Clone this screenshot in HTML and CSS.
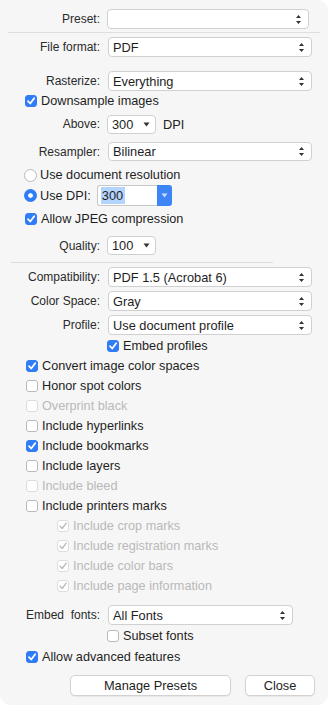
FILE: index.html
```html
<!DOCTYPE html>
<html lang="en">
<head>
    <meta charset="UTF-8">
    <meta name="viewport" content="width=device-width, initial-scale=1.0">
    <title>PDF Options</title>
    <link rel="stylesheet" href="styles.css">
</head>
<body>
    <div class="panel">
        <div class="row preset">
            <span class="label">Preset:</span>
            <div class="select sel-preset"><span></span><svg class="updown" width="7" height="11" viewBox="0 0 7 11"><path d="M3.5 1 L6 4 H1 Z M3.5 10 L6 7 H1 Z" fill="#333"/></svg></div>
        </div>
        <div class="sep sep-top"></div>

        <div class="row r-format">
            <span class="label">File format:</span>
            <div class="select"><span>PDF</span><svg class="updown" width="7" height="11" viewBox="0 0 7 11"><path d="M3.5 1 L6 4 H1 Z M3.5 10 L6 7 H1 Z" fill="#333"/></svg></div>
        </div>
        <div class="row r-raster">
            <span class="label">Rasterize:</span>
            <div class="select"><span>Everything</span><svg class="updown" width="7" height="11" viewBox="0 0 7 11"><path d="M3.5 1 L6 4 H1 Z M3.5 10 L6 7 H1 Z" fill="#333"/></svg></div>
        </div>
        <div class="check top"><span class="box on"><svg width="10" height="10" viewBox="0 0 10 10"><path d="M2 5.2 L4.2 7.5 L8.2 2.2" fill="none" stroke="#fff" stroke-width="1.8" stroke-linecap="round" stroke-linejoin="round"/></svg></span>Downsample images</div>
        <div class="row r-above">
            <span class="label">Above:</span>
            <div class="select small"><span>300</span><svg class="down" width="7" height="5" viewBox="0 0 7 5"><path d="M0.5 0.5 H6.5 L3.5 4.5 Z" fill="#333"/></svg></div>
            <span class="unit">DPI</span>
        </div>
        <div class="row r-resample">
            <span class="label">Resampler:</span>
            <div class="select"><span>Bilinear</span><svg class="updown" width="7" height="11" viewBox="0 0 7 11"><path d="M3.5 1 L6 4 H1 Z M3.5 10 L6 7 H1 Z" fill="#333"/></svg></div>
        </div>
        <div class="radio-row r-docres"><span class="radio"></span>Use document resolution</div>
        <div class="radio-row r-dpi">
            <span class="radio on"></span>Use DPI:
            <div class="combo"><span class="field"><span class="picked">300</span></span><span class="combo-btn"><svg width="7" height="5" viewBox="0 0 7 5"><path d="M0.5 0.5 H6.5 L3.5 4.5 Z" fill="#c9dcfb"/></svg></span></div>
        </div>
        <div class="check top r-jpeg"><span class="box on"><svg width="10" height="10" viewBox="0 0 10 10"><path d="M2 5.2 L4.2 7.5 L8.2 2.2" fill="none" stroke="#fff" stroke-width="1.8" stroke-linecap="round" stroke-linejoin="round"/></svg></span>Allow JPEG compression</div>
        <div class="row r-quality">
            <span class="label">Quality:</span>
            <div class="select small"><span>100</span><svg class="down" width="7" height="5" viewBox="0 0 7 5"><path d="M0.5 0.5 H6.5 L3.5 4.5 Z" fill="#333"/></svg></div>
        </div>
        <div class="sep sep-mid"></div>

        <div class="row r-compat">
            <span class="label">Compatibility:</span>
            <div class="select"><span>PDF 1.5 (Acrobat 6)</span><svg class="updown" width="7" height="11" viewBox="0 0 7 11"><path d="M3.5 1 L6 4 H1 Z M3.5 10 L6 7 H1 Z" fill="#333"/></svg></div>
        </div>
        <div class="row r-space">
            <span class="label">Color Space:</span>
            <div class="select"><span>Gray</span><svg class="updown" width="7" height="11" viewBox="0 0 7 11"><path d="M3.5 1 L6 4 H1 Z M3.5 10 L6 7 H1 Z" fill="#333"/></svg></div>
        </div>
        <div class="row r-space">
            <span class="label">Profile:</span>
            <div class="select"><span>Use document profile</span><svg class="updown" width="7" height="11" viewBox="0 0 7 11"><path d="M3.5 1 L6 4 H1 Z M3.5 10 L6 7 H1 Z" fill="#333"/></svg></div>
        </div>
        <div class="check inner r-embed"><span class="box on"><svg width="10" height="10" viewBox="0 0 10 10"><path d="M2 5.2 L4.2 7.5 L8.2 2.2" fill="none" stroke="#fff" stroke-width="1.8" stroke-linecap="round" stroke-linejoin="round"/></svg></span>Embed profiles</div>
        <div class="check"><span class="box on"><svg width="10" height="10" viewBox="0 0 10 10"><path d="M2 5.2 L4.2 7.5 L8.2 2.2" fill="none" stroke="#fff" stroke-width="1.8" stroke-linecap="round" stroke-linejoin="round"/></svg></span>Convert image color spaces</div>
        <div class="check"><span class="box"></span>Honor spot colors</div>
        <div class="check off"><span class="box"></span>Overprint black</div>
        <div class="check"><span class="box"></span>Include hyperlinks</div>
        <div class="check"><span class="box on"><svg width="10" height="10" viewBox="0 0 10 10"><path d="M2 5.2 L4.2 7.5 L8.2 2.2" fill="none" stroke="#fff" stroke-width="1.8" stroke-linecap="round" stroke-linejoin="round"/></svg></span>Include bookmarks</div>
        <div class="check"><span class="box"></span>Include layers</div>
        <div class="check off"><span class="box"></span>Include bleed</div>
        <div class="check"><span class="box"></span>Include printers marks</div>
        <div class="check sub off"><span class="box"><svg width="10" height="10" viewBox="0 0 10 10"><path d="M2 5.2 L4.2 7.5 L8.2 2.2" fill="none" stroke="#bdbdbd" stroke-width="1.4" stroke-linecap="round" stroke-linejoin="round"/></svg></span>Include crop marks</div>
        <div class="check sub off"><span class="box"><svg width="10" height="10" viewBox="0 0 10 10"><path d="M2 5.2 L4.2 7.5 L8.2 2.2" fill="none" stroke="#bdbdbd" stroke-width="1.4" stroke-linecap="round" stroke-linejoin="round"/></svg></span>Include registration marks</div>
        <div class="check sub off"><span class="box"><svg width="10" height="10" viewBox="0 0 10 10"><path d="M2 5.2 L4.2 7.5 L8.2 2.2" fill="none" stroke="#bdbdbd" stroke-width="1.4" stroke-linecap="round" stroke-linejoin="round"/></svg></span>Include color bars</div>
        <div class="check sub off"><span class="box"><svg width="10" height="10" viewBox="0 0 10 10"><path d="M2 5.2 L4.2 7.5 L8.2 2.2" fill="none" stroke="#bdbdbd" stroke-width="1.4" stroke-linecap="round" stroke-linejoin="round"/></svg></span>Include page information</div>

        <div class="row r-fonts">
            <span class="label">Embed&nbsp; fonts:</span>
            <div class="select sel-fonts"><span>All Fonts</span><svg class="updown" width="7" height="11" viewBox="0 0 7 11"><path d="M3.5 1 L6 4 H1 Z M3.5 10 L6 7 H1 Z" fill="#333"/></svg></div>
        </div>
        <div class="check inner r-subset"><span class="box"></span>Subset fonts</div>
        <div class="check r-adv"><span class="box on"><svg width="10" height="10" viewBox="0 0 10 10"><path d="M2 5.2 L4.2 7.5 L8.2 2.2" fill="none" stroke="#fff" stroke-width="1.8" stroke-linecap="round" stroke-linejoin="round"/></svg></span>Allow advanced features</div>

        <div class="buttons">
            <button class="btn wide">Manage Presets</button>
            <button class="btn">Close</button>
        </div>
    </div>
</body>
</html>
```

FILE: styles.css
```css
body {
    margin: 0;
    background-color: #fff;
    font-family: "Liberation Sans", Arial, sans-serif;
    color: #222;
}
.panel {
    width: 328px;
    height: 705px;
    box-sizing: border-box;
    padding-top: 9px;
    background-color: #f6f6f6;
    border-radius: 0 11px 11px 11px;
}
.row {
    display: flex;
    align-items: center;
    height: 20px;
}
.label {
    width: 100px;
    text-align: right;
    font-size: 12px;
    color: #2a2a2a;
    flex-shrink: 0;
}
.select {
    display: flex;
    align-items: center;
    justify-content: space-between;
    width: 204px;
    height: 20px;
    margin-left: 8px;
    padding: 0 6px 0 4px;
    box-sizing: border-box;
    background-color: #fff;
    border: 1px solid #d0d0d0;
    border-radius: 4px;
    font-size: 12.8px;
    color: #1e1e1e;
}
.sel-preset {
    width: 202px;
    margin-left: 7px;
}
.sel-fonts {
    width: 185px;
}
.select.small {
    width: 49px;
    height: 19px;
    margin-left: 7px;
    padding-right: 5px;
}
.unit {
    font-size: 12.8px;
    margin-left: 7px;
}
.sep {
    height: 1px;
    background-color: #dedede;
}
.sep-top {
    margin: 3px 8px 0 8px;
}
.sep-mid {
    margin: 7px 0 0 11px;
    width: 262px;
}
.r-format { margin-top: 4px; }
.r-raster { margin-top: 14px; }
.r-above { margin-top: 3px; }
.r-resample { margin-top: 8px; height: 19px; }
.r-resample .select { height: 19px; }
.r-quality { margin-top: 7px; height: 19px; }
.r-compat { margin-top: 4px; }
.r-space { margin-top: 4px; }
.r-embed { margin-top: 1px; }
.r-fonts { margin-top: 9px; }
.r-subset { margin-top: 1px; }
.r-adv { margin-top: 1px; }

.check {
    display: flex;
    align-items: center;
    height: 20px;
    padding-left: 26px;
    font-size: 12.7px;
    color: #1e1e1e;
}
.check.top { padding-left: 25px; }
.check.inner { padding-left: 107px; }
.check.sub { padding-left: 57px; }
.check.off { color: #b9b9b9; }
.box {
    display: flex;
    align-items: center;
    justify-content: center;
    width: 12px;
    height: 12px;
    margin-right: 4px;
    box-sizing: border-box;
    background-color: #fff;
    border: 1px solid #b9b9b9;
    border-radius: 3px;
}
.check.off .box {
    border-color: #dcdcdc;
}
.box.on {
    background-color: #2f7cf6;
    border-color: #2f7cf6;
}
.r-jpeg { margin-top: 3px; }

.radio-row {
    display: flex;
    align-items: center;
    height: 20px;
    padding-left: 24px;
    font-size: 12.7px;
    color: #1e1e1e;
}
.r-docres { margin-top: 4px; }
.r-dpi { height: 21px; }
.radio {
    width: 13px;
    height: 13px;
    margin-right: 3px;
    box-sizing: border-box;
    background-color: #fff;
    border: 1px solid #b9b9b9;
    border-radius: 50%;
}
.radio.on {
    background-color: #2f7cf6;
    border: 4px solid #2f7cf6;
    box-shadow: inset 0 0 0 10px #fff;
}
.combo {
    display: flex;
    height: 21px;
    margin-left: 6px;
}
.field {
    display: flex;
    align-items: center;
    width: 60px;
    box-sizing: border-box;
    padding-left: 3px;
    background-color: #fff;
    border: 1px solid #c9c9c9;
    border-right: none;
    border-radius: 3px 0 0 3px;
    font-size: 12.8px;
}
.picked {
    background-color: #b3d4fd;
    padding: 1px 2px 1px 1px;
}
.combo-btn {
    display: flex;
    align-items: center;
    justify-content: center;
    width: 15px;
    background-color: #3d84f6;
    border-radius: 0 3px 3px 0;
}
.buttons {
    display: flex;
    margin-top: 8px;
    padding-left: 70px;
    gap: 14px;
}
.btn {
    height: 21px;
    width: 70px;
    padding: 0;
    font-family: inherit;
    font-size: 12.8px;
    color: #1e1e1e;
    background-color: #fff;
    border: 1px solid #d2d2d2;
    border-radius: 5px;
    box-shadow: 0 1px 1px rgba(0, 0, 0, 0.06);
}
.btn.wide {
    width: 161px;
}
```
